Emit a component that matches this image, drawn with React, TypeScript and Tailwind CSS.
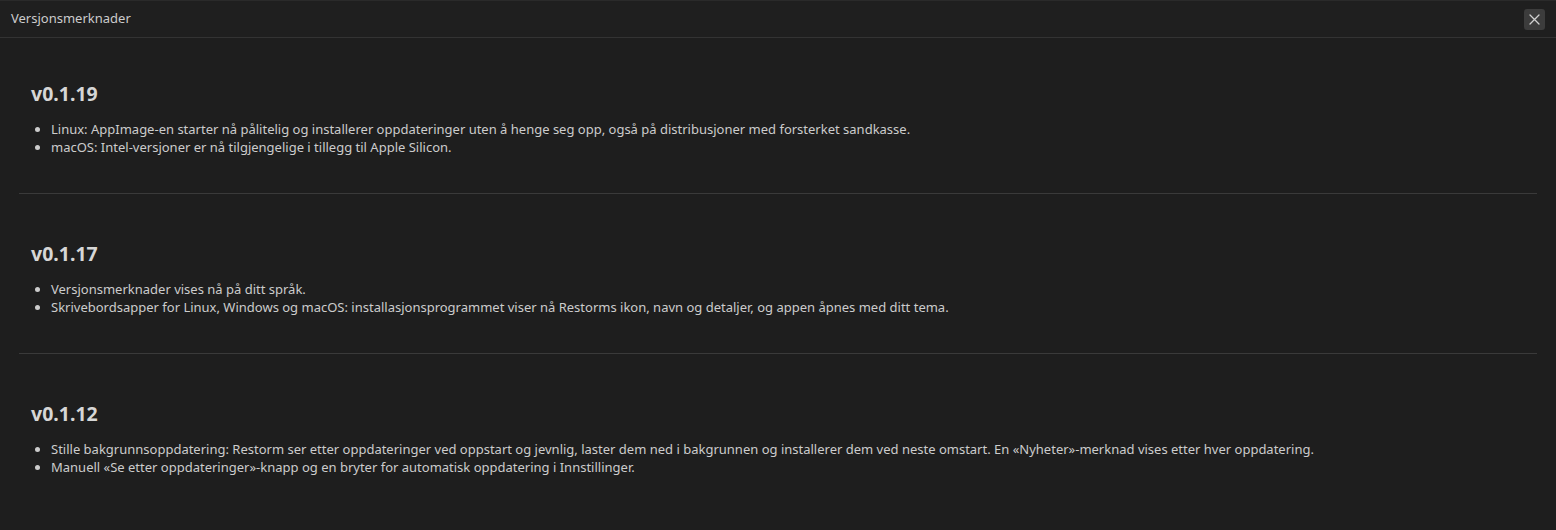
import React from "react";

const sections = [
  {
    v: "v0.1.19",
    items: [
      "Linux: AppImage-en starter nå pålitelig og installerer oppdateringer uten å henge seg opp, også på distribusjoner med forsterket sandkasse.",
      "macOS: Intel-versjoner er nå tilgjengelige i tillegg til Apple Silicon.",
    ],
  },
  {
    v: "v0.1.17",
    items: [
      "Versjonsmerknader vises nå på ditt språk.",
      "Skrivebordsapper for Linux, Windows og macOS: installasjonsprogrammet viser nå Restorms ikon, navn og detaljer, og appen åpnes med ditt tema.",
    ],
  },
  {
    v: "v0.1.12",
    items: [
      "Stille bakgrunnsoppdatering: Restorm ser etter oppdateringer ved oppstart og jevnlig, laster dem ned i bakgrunnen og installerer dem ved neste omstart. En «Nyheter»-merknad vises etter hver oppdatering.",
      "Manuell «Se etter oppdateringer»-knapp og en bryter for automatisk oppdatering i Innstillinger.",
    ],
  },
];

export default function App() {
  return (
    <div
      className="w-[1556px] h-[530px] bg-[#1e1e1e] text-[#cccccc] overflow-hidden flex flex-col"
      style={{ fontFamily: '"Noto Sans", "Open Sans", sans-serif' }}
    >
      <div className="h-[38px] shrink-0 flex items-center justify-between pl-[11px] pr-[11px] border-t border-t-[#2a2a2a] border-b border-b-[#333333] bg-[#1f1f1f]">
        <span className="text-[13px] text-[#cccccc]">Versjonsmerknader</span>
        <button className="w-[21px] h-[21px] rounded-[3px] bg-[#3c3c3c] flex items-center justify-center">
          <svg width="11" height="11" viewBox="0 0 11 11" fill="none" stroke="#d0d0d0" strokeWidth="1.3" strokeLinecap="round">
            <path d="M1 1L10 10M10 1L1 10" />
          </svg>
        </button>
      </div>
      <div className="flex-1 px-[19px] pt-[43px]">
        {sections.map((s, i) => (
          <div key={s.v}>
            {i > 0 && <div className="h-px bg-[#3a3a3a] mt-[37px] mb-[47px]" />}
            <div className="px-3">
              <h3 className="text-[19.5px] font-bold leading-[26px] text-[#d6d6d6] mb-[13px]">{s.v}</h3>
              <ul className="list-disc pl-[20px] text-[13px] leading-[18px] text-[#cccccc]">
                {s.items.map((t) => (
                  <li key={t}>{t}</li>
                ))}
              </ul>
            </div>
          </div>
        ))}
      </div>
    </div>
  );
}
